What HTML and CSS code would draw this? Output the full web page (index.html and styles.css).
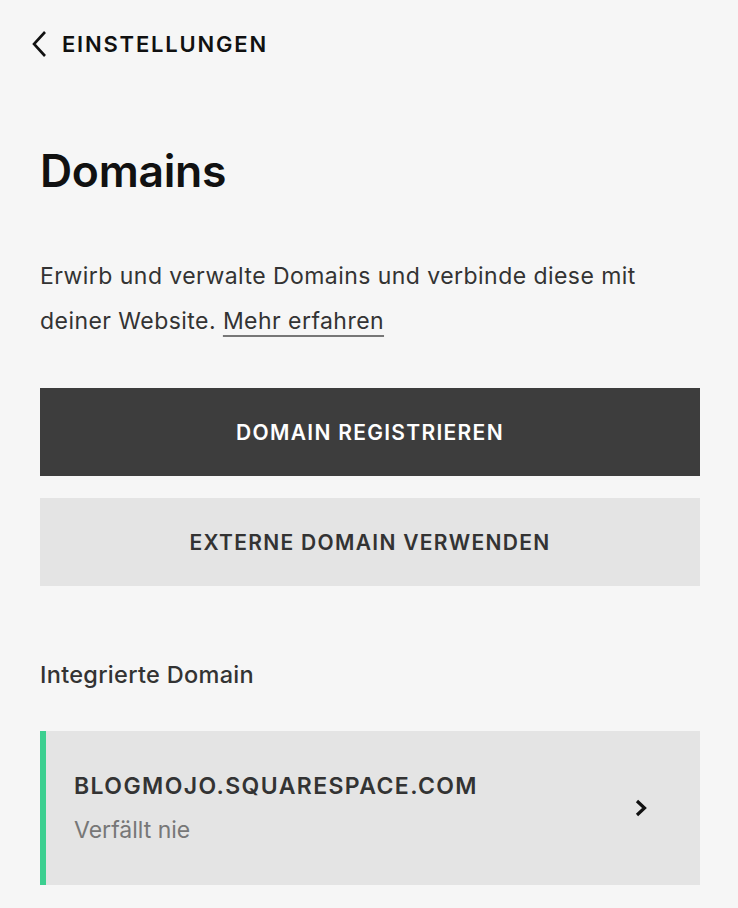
FILE: index.html
```html
<!DOCTYPE html>
<html lang="de">
<head>
  <meta charset="UTF-8">
  <title>Domains</title>
  <link rel="stylesheet" href="styles.css">
</head>
<body>
  <div id="panel">
    <a class="back" href="#">
      <svg class="back-icon" width="18" height="28" viewBox="0 0 18 28">
        <path d="M15 2 L4 14 L15 26" fill="none" stroke="#111" stroke-width="2.6"/>
      </svg>
      <span>EINSTELLUNGEN</span>
    </a>

    <h1 class="title">Domains</h1>

    <p class="intro">Erwirb und verwalte Domains und verbinde diese mit deiner Website. <a class="more" href="#">Mehr erfahren</a></p>

    <button class="btn btn-dark">DOMAIN REGISTRIEREN</button>
    <button class="btn btn-light">EXTERNE DOMAIN VERWENDEN</button>

    <h2 class="section-label">Integrierte Domain</h2>

    <!-- built-in domain card -->
    <a class="domain-card" href="#">
      <div class="domain-info">
        <div class="domain-name">BLOGMOJO.SQUARESPACE.COM</div>
        <div class="domain-sub">Verfällt nie</div>
      </div>
      <svg class="chevron" width="14" height="20" viewBox="0 0 14 20">
        <path d="M3 3 L10.5 10 L3 17" fill="none" stroke="#111" stroke-width="3.2"/>
      </svg>
    </a>
  </div>
</body>
</html>
```

FILE: styles.css
```css
body {
  margin: 0;
  background: #f6f6f6;
  font-family: Inter, "Liberation Sans", sans-serif;
  color: #333;
}
#panel {
  padding: 30px 38px 0 40px;
  display: flex;
  flex-direction: column;
}
.back {
  display: flex;
  align-items: center;
  gap: 14px;
  margin-left: -10px;
  color: #111;
  text-decoration: none;
  font-size: 22px;
  font-weight: 600;
  letter-spacing: 1.8px;
  height: 28px;
}
.title {
  margin: 83px 0 0;
  font-size: 44.5px;
  font-weight: 600;
  color: #111;
  letter-spacing: -0.3px;
  line-height: 60px;
}
.intro {
  margin: 53px 0 0;
  max-width: 640px;
  font-size: 23px;
  line-height: 45px;
  letter-spacing: 0.45px;
  color: #333;
}
.more {
  color: #333;
  text-decoration: underline;
  text-decoration-color: #777;
  text-decoration-thickness: 1.5px;
  text-underline-offset: 6px;
}
.btn {
  display: block;
  width: 100%;
  height: 88px;
  border: none;
  font-family: inherit;
  font-size: 21px;
  font-weight: 600;
  letter-spacing: 1.3px;
}
.btn-dark {
  margin-top: 44px;
  background: #3d3d3d;
  color: #fff;
}
.btn-light {
  margin-top: 22px;
  background: #e4e4e4;
  color: #333;
}
.section-label {
  margin: 74px 0 0;
  font-size: 23.5px;
  font-weight: 500;
  letter-spacing: 0.3px;
  color: #333;
  line-height: 30px;
}
.domain-card {
  margin-top: 41px;
  height: 154px;
  box-sizing: border-box;
  background: #e4e4e4;
  border-left: 6px solid #3ccf90;
  padding: 0 52px 0 28px;
  display: flex;
  align-items: center;
  justify-content: space-between;
  text-decoration: none;
}
.domain-name {
  font-size: 23px;
  font-weight: 600;
  letter-spacing: 1.4px;
  color: #333;
}
.domain-sub {
  margin-top: 16px;
  font-size: 23px;
  color: #777;
}
.chevron {
  display: block;
}
```
